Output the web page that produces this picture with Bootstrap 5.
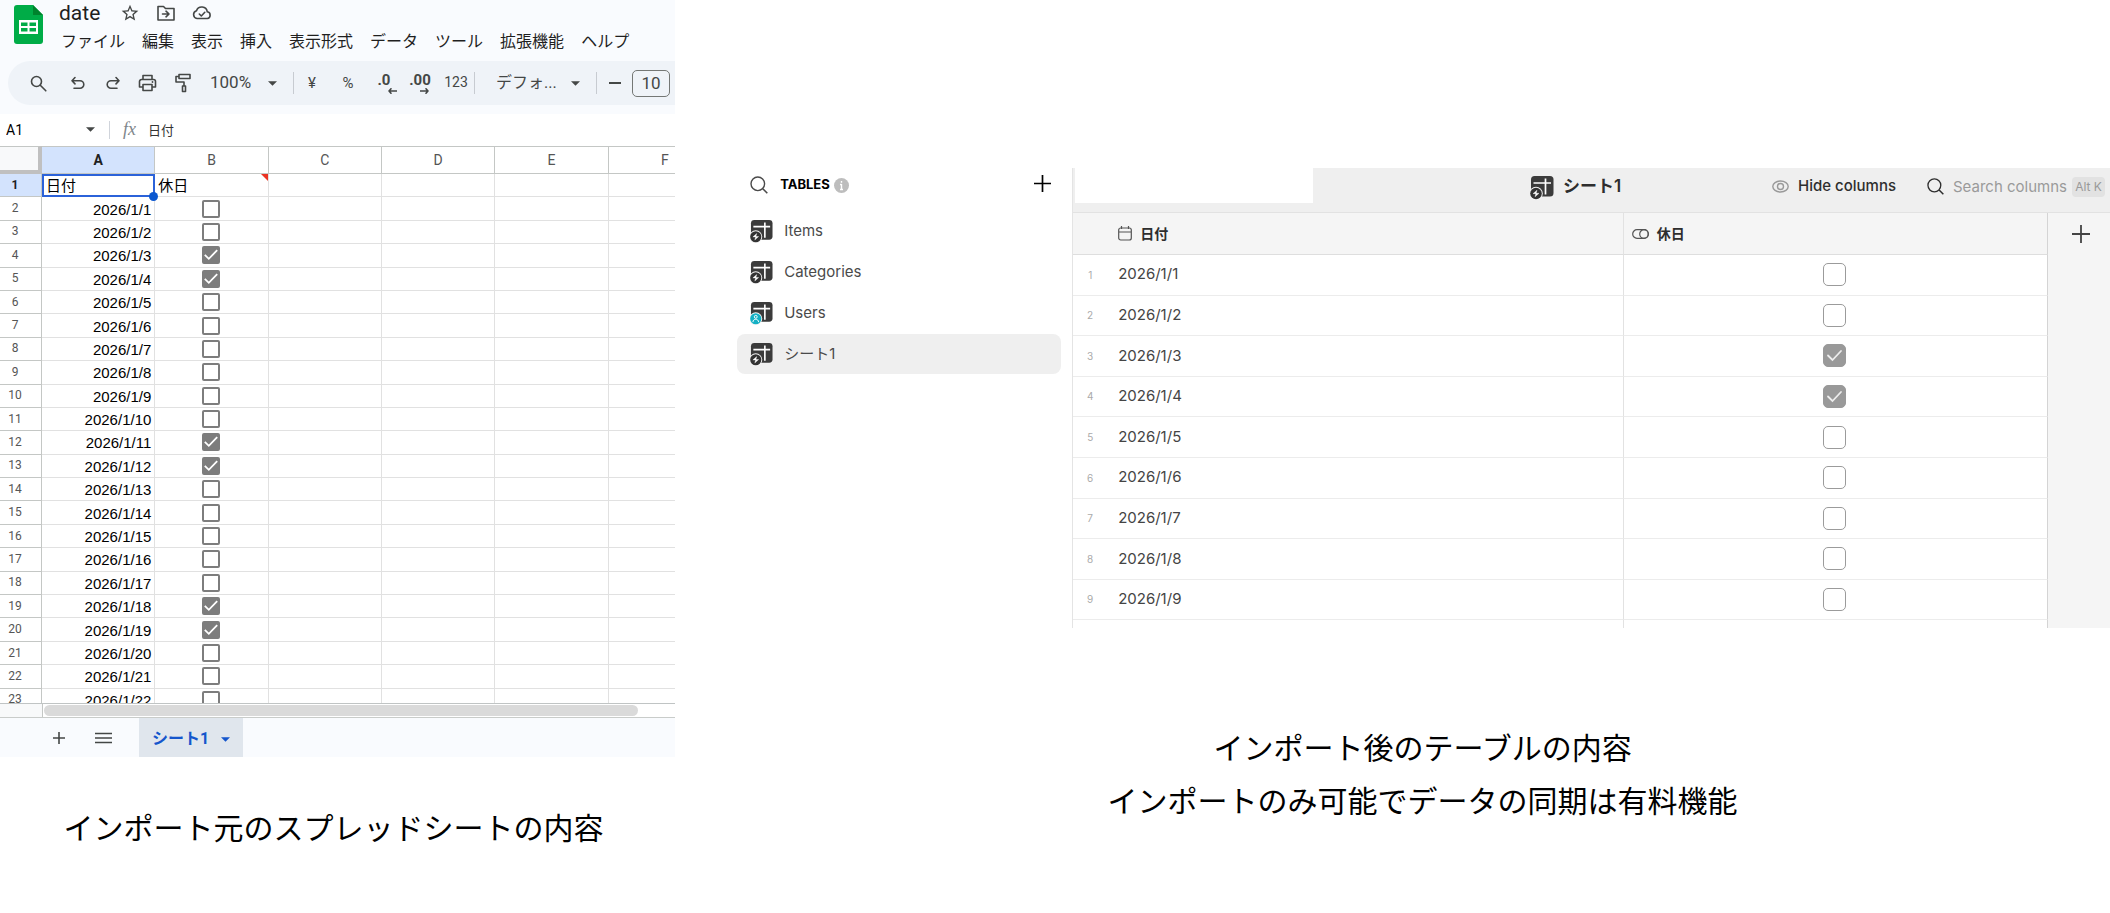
<!DOCTYPE html>
<html lang="ja">
<head>
<meta charset="utf-8">
<meta name="viewport" content="width=device-width, initial-scale=1">
<title>スプレッドシートのインポート</title>
<link href="https://cdn.jsdelivr.net/npm/bootstrap@5.3.0/dist/css/bootstrap.min.css" rel="stylesheet">
<style>
body{font-family:Roboto,"Noto Sans CJK JP",sans-serif;font-size:16px;line-height:1.25;color:#1f1f1f;background:#fff}
svg{display:block;flex:none}
button{border:0;background:none;padding:0;color:inherit;display:flex;align-items:center;justify-content:center}
.ln{fill:none;stroke:currentColor;stroke-width:1.6;stroke-linecap:round;stroke-linejoin:round}
.caption-text{font-family:"Noto Sans CJK JP",sans-serif;font-size:30px;line-height:53px;color:#000}

/* spreadsheet */
.sheet-side{width:32%}
.sheet-head{background:#f9fbfe;height:114px}
.sheet-logo{margin:5px 14px 0}
.doc-row{padding-left:2px}
.doc-name{font-size:21px;line-height:26px;margin-right:20px}
.doc-icons{gap:16px;color:#444746}
.menu-bar{gap:17px;padding-left:4px;line-height:22px;margin-top:5px}
.menu-bar a{color:#1f1f1f;text-decoration:none}
.tool-bar{height:44px;margin:8px 0 0 8px;padding-left:8px;background:#eff3f8;border-radius:22px 0 0 22px;color:#444746}
.tool-bar button{height:36px;width:35px}
.tool-bar .wide-tool{width:44px}
.tool-bar .text-tool{width:36px;font-size:15px}
.tool-bar .num-tool{font-size:14px}
.tool-bar .rule{width:1px;height:22px;background:#c7cbd1}
.tool-select{appearance:none;border:0;height:36px;color:#444746;font-size:17px;background:transparent url("data:image/svg+xml,%3Csvg xmlns='http://www.w3.org/2000/svg' viewBox='0 0 10 5'%3E%3Cpath d='M0 0h10L5 5z' fill='%23444746'/%3E%3C/svg%3E") no-repeat right 16px center/9px 5px}
.zoom-select{width:93px;padding:0 0 0 10px}
.font-select{width:117px;padding:0 0 0 17px;font-size:16px;margin-left:4px}
.size-input{width:38px;height:27px;border:1px solid #747775;border-radius:5px;background:transparent;text-align:center;color:#444746;font-size:17px;padding:0}
.formula-bar{height:32px;padding-bottom:1px}
.name-input{border:0;width:109px;height:24px;padding:0 0 0 6px;font-size:14px;background:url("data:image/svg+xml,%3Csvg xmlns='http://www.w3.org/2000/svg' viewBox='0 0 10 5'%3E%3Cpath d='M0 0h10L5 5z' fill='%23444746'/%3E%3C/svg%3E") no-repeat right 14px center/9px 5px}
.formula-bar .rule{width:1px;height:18px;background:#d0d4db}
.fx{font:italic 18px "Liberation Serif",serif;color:#80868b;width:25px;margin-left:13px}
.formula-input{border:0;font-size:13px;padding:0;height:24px;color:#333}
.grid-pane{height:558px;overflow:hidden;border-bottom:1px solid #c0c4c4}
.grid-tab{width:722px;height:566px;table-layout:fixed;border-collapse:separate;border-spacing:0;line-height:17px}
.grid-tab tbody tr{height:23px}
.grid-tab th{font-weight:400;font-size:14px;color:#555;text-align:center;border:solid #c4c7c5;border-width:1px 1px 1px 0;height:28px;padding:0;line-height:18px}
.grid-tab tbody th{font-size:12px;line-height:16px;height:auto;border-width:0 1px 1px 0;padding:0 11px 1px 0}
.grid-tab .num-col{width:42px}
.grid-tab thead th.corner{background:#f8f9fa;border-right:4px solid #c0c0c0;border-bottom:4px solid #c0c0c0}
.grid-tab th.picked{background:#d3e3fd;color:#1f1f1f;font-weight:700}
.grid-tab td{border:solid #e1e1e1;border-width:0 1px 1px 0;padding:0 3px;color:#000;font-family:"Liberation Sans","Noto Sans CJK JP",sans-serif;font-size:15px;position:relative}
.grid-tab td.day{text-align:right;padding-top:1px}
.grid-tab td.picked{border:2px solid #2b62d9;padding-left:2px}
.grid-tab td.noted::after{content:"";position:absolute;right:0;top:0;border:solid transparent;border-width:0 7px 7px 0;border-right-color:#ea3323}
.dot{position:absolute;right:-5px;bottom:-6px;width:9px;height:9px;border-radius:50%;background:#0b57d0;z-index:1}
.sheet-check,.base-check{float:none;display:block;margin:0 auto}
.form-check-input.sheet-check{width:18px;height:18px;border:2px solid #7d7d7d;border-radius:2px}
.form-check-input.sheet-check:checked{background:#7d7d7d url("data:image/svg+xml,%3Csvg xmlns='http://www.w3.org/2000/svg' viewBox='0 0 14 14'%3E%3Cpath d='M.8 6.8l4 4 8.400-8.600' fill='none' stroke='%23fff' stroke-width='1.800'/%3E%3C/svg%3E") center/14px no-repeat;border-color:#7d7d7d}
.scroll-row{height:14px;gap:1px;border-bottom:1px solid #c9ccca}
.scroll-row .stub{width:43px;height:13px;background:#f8f9fa;border-right:1px solid #c4c7c5}
.scroll-row .thumb{width:88%;height:11px;border-radius:6px;background:#dadada}
.tabs-row{height:39px;background:#f9fbfe;color:#444746;padding-left:50px;gap:27px}
.sheet-tab{background:#e0e6ed;color:#1556cc;height:39px;width:104px;gap:12px;font-weight:700;padding-top:3px}

/* imported tables */
.base-side{font-family:Inter,"Noto Sans CJK JP",sans-serif;margin-left:60px;padding-top:168px;min-width:0}
.base-pane{height:460px}
.tables-nav{width:337px;padding:0 11px 0 2px;color:#4a4a4a;font-size:15px}
.nav-head{height:34px;padding:0 10px 0 13px;margin-bottom:9px}
.nav-head h2{font-size:13px;font-weight:700;color:#000;margin:0 4px 0 12px}
.nav-row{height:40px;border-radius:8px;padding-left:13px;gap:11px;margin-bottom:1px;color:#4a4a4a;text-decoration:none}
.nav-row.current{background:#efefef}
.base-main{background:#f5f5f5;border-left:1px solid #e4e4e4;min-width:0;overflow:hidden}
.base-bar{height:45px;background:#efefef;border-bottom:1px solid #e2e2e2;display:grid;grid-template-columns:1fr auto 1fr;padding:0 5px 0 2px}
.blank-box{background:#fff;width:238px;height:35px}
.base-title{font-size:17px;font-weight:600;margin:0 29px 6px 0;gap:9px;color:#2e2e2e}
.base-tools{font-size:15px;color:#2e2e2e;padding-bottom:7px}
.base-tools button{gap:9px;font-weight:500;margin-right:31px}
.search-cols{border:0;background:none;padding:0;width:119px;margin-left:9px;height:22px}
.search-cols::placeholder{color:#9a9a9a;opacity:1}
.key-hint{font-size:12px;color:#999;background:#e2e2e2;border-radius:4px;width:33px;height:20px;line-height:20px;text-align:center}
.base-tab{width:94%;height:448px;table-layout:fixed;border-collapse:separate;border-spacing:0;color:#444;font-size:15px}
.base-tab .index-col{width:4%}
.base-tab .flag-col{width:43.5%}
.base-tab thead th{height:42px;background:#f5f5f5;border-bottom:1px solid #dedede;font-size:14px;font-weight:700;color:#2e2e2e;padding:0}
.base-tab td,.base-tab tbody th{background:#fff;border-bottom:1px solid #ececec;padding:0}
.base-tab tbody th{font-weight:400;font-size:10px;color:#aaa;text-align:center;padding-right:5px}
.base-tab td.day,.base-tab thead th.day{border-right:1px solid #e2e2e2;padding-left:6px}
.base-tab .flag{border-right:1px solid #d4d4d4}
.base-tab td.flag{padding-right:2px}
.base-tab thead th.flag{padding-left:8px}
.form-check-input.base-check{width:23px;height:23px;border:1px solid #9b9b9b;border-radius:5px}
.form-check-input.base-check:checked{background:#999 url("data:image/svg+xml,%3Csvg xmlns='http://www.w3.org/2000/svg' viewBox='0 0 23 23'%3E%3Cpath d='M5 11.500l4.500 4.500L18 7' fill='none' stroke='%23ededed' stroke-width='1.800' stroke-linecap='round'/%3E%3C/svg%3E") center/23px no-repeat;border-color:#999}
.add-col{width:6%;height:42px;padding-left:4px;color:#444}
.base-caption{padding-top:92px}
.sheet-caption{padding:43px 8px 0 0}
</style>
</head>
<body>
<svg class="d-none" aria-hidden="true">
  <symbol id="tbl-base" viewBox="0 0 24 25"><rect x="1" y="1" width="22.500" height="20.500" rx="3.500" fill="#3b3b3b"/><path d="M3.500 8h17.500M15.500 3.500v16" fill="none" stroke="#fff" stroke-width="1.700"/><circle cx="6" cy="18.500" r="6.800" fill="#f4f4f4"/><circle cx="6" cy="18.500" r="5.800" fill="#333"/><path d="M7 15.200L3 18.700h3zM5 21.800L9 18.300H6z" fill="#fff" stroke="#fff" stroke-width=".4"/></symbol>
  <symbol id="tbl-user" viewBox="0 0 24 25"><rect x="1" y="1" width="22.500" height="20.500" rx="3.500" fill="#3b3b3b"/><path d="M3.500 8h17.500M15.500 3.500v16" fill="none" stroke="#fff" stroke-width="1.700"/><circle cx="6" cy="18.500" r="6.800" fill="#f4f4f4"/><circle cx="6" cy="18.500" r="5.800" fill="#14b0c4"/><circle cx="6" cy="16.500" r="1.500" fill="none" stroke="#fff"/><path d="M3 22c.3-4 5.700-4 6 0" fill="none" stroke="#fff"/></symbol>
  <symbol id="lens" viewBox="0 0 18 18"><circle cx="7.800" cy="7.800" r="6.800" fill="none" stroke="currentColor" stroke-width="1.400"/><path d="M12.800 12.800l4.500 4.500" stroke="currentColor" stroke-width="1.600"/></symbol>
  <symbol id="cross" viewBox="0 0 18 18"><path d="M9 0v18M0 9h18" stroke="currentColor" stroke-width="1.800"/></symbol>
</svg>

<div class="d-flex align-items-start">
  <section class="sheet-side flex-shrink-0">
    <header class="sheet-head overflow-hidden">
      <div class="d-flex">
        <svg class="sheet-logo" width="29" height="39" viewBox="0 0 29 39"><path d="M3 0h16l10 10v26a3 3 0 0 1-3 3H3a3 3 0 0 1-3-3V3a3 3 0 0 1 3-3z" fill="#00ac47"/><path d="M19 0l10 10H19z" fill="#00832d"/><path d="M5 15h19v14H5zM7 17.500v3.500h6.500v-3.500zM15.500 17.500v3.500H22v-3.500zM7 23v3.500h6.500V23zM15.500 23v3.500H22V23z" fill="#fff" fill-rule="evenodd"/></svg>
        <div>
          <div class="doc-row d-flex align-items-center">
            <span class="doc-name">date</span>
            <div class="doc-icons d-flex align-items-center">
              <button aria-label="スター"><svg width="20" height="20" viewBox="0 0 24 24"><path d="M22 9.240l-7.190-.62L12 2 9.190 8.630 2 9.240l5.460 4.730L5.820 21 12 17.270 18.180 21l-1.630-7.030L22 9.240zM12 15.400l-3.760 2.270 1-4.280-3.320-2.880 4.380-.38L12 6.100l1.710 4.040 4.380.38-3.320 2.880 1 4.280L12 15.400z" fill="currentColor"/></svg></button>
              <button aria-label="移動"><svg width="20" height="20" viewBox="0 0 20 20"><path d="M2 17V3.500h5.500l2 2H18V17z" class="ln"/><path d="M6.500 11h6M10 8.200l3 2.800-3 2.800" class="ln"/></svg></button>
              <button aria-label="保存状態"><svg width="20" height="20" viewBox="0 0 20 20"><path d="M5 15.500a4 4 0 0 1-.5-7.800 5.600 5.600 0 0 1 10.800 1.100 3.400 3.400 0 0 1 0 6.700z" class="ln"/><path d="M7.300 11l2 2 3.500-3.700" class="ln"/></svg></button>
            </div>
          </div>
          <nav class="menu-bar d-flex text-nowrap">
            <a href="#">ファイル</a><a href="#">編集</a><a href="#">表示</a><a href="#">挿入</a><a href="#">表示形式</a><a href="#">データ</a><a href="#">ツール</a><a href="#">拡張機能</a><a href="#">ヘルプ</a>
          </nav>
        </div>
      </div>
      <div class="tool-bar d-flex align-items-center">
        <button class="wide-tool" aria-label="検索"><svg width="17" height="17" viewBox="0 0 17 17"><circle cx="6.500" cy="6.500" r="5" class="ln"/><path d="M10.300 10.300l5.500 5.500" class="ln"/></svg></button>
        <button aria-label="元に戻す"><svg width="16" height="16" viewBox="0 0 16 16"><path d="M5 2.500L2 5.700l3 3.200M2.500 5.700h7.500a3.800 3.800 0 0 1 0 7.600H4" class="ln"/></svg></button>
        <button aria-label="やり直し"><svg width="16" height="16" viewBox="0 0 16 16"><path d="M11 2.500l3 3.200-3 3.200M13.500 5.700H6a3.800 3.800 0 0 0 0 7.600h6" class="ln"/></svg></button>
        <button aria-label="印刷"><svg width="19" height="18" viewBox="0 0 19 18"><path d="M5 5V1.500h9V5M5 13H1.500V7.500A2 2 0 0 1 3.500 5.500h12a2 2 0 0 1 2 2V13H14M5 10.500h9v6H5z" class="ln"/><circle cx="14.500" cy="8" r=".9" fill="currentColor"/></svg></button>
        <button aria-label="書式の貼り付け"><svg width="18" height="20" viewBox="0 0 18 20"><path d="M5 1.500h11v4H5zM5 3.500H2V9h8v4M8.500 13h3v5.500h-3z" class="ln"/></svg></button>
        <select class="tool-select zoom-select" aria-label="ズーム"><option>100%</option></select>
        <span class="rule"></span>
        <button class="text-tool">¥</button>
        <button class="text-tool">%</button>
        <button class="text-tool flex-column fw-bold" aria-label="小数点以下の桁数を減らす"><span class="lh-1">.0</span><svg width="9" height="6" viewBox="0 0 9 6" class="ms-3"><path d="M8.500 3H1M3 .8L1 3l2 2.200" class="ln"/></svg></button>
        <button class="text-tool flex-column fw-bold" aria-label="小数点以下の桁数を増やす"><span class="lh-1">.00</span><svg width="9" height="6" viewBox="0 0 9 6" class="ms-2"><path d="M.5 3H8M6 .8L8 3 6 5.200" class="ln"/></svg></button>
        <button class="text-tool num-tool">123</button>
        <span class="rule"></span>
        <select class="tool-select font-select" aria-label="フォント"><option>デフォ...</option></select>
        <span class="rule"></span>
        <button aria-label="縮小"><svg width="12" height="2"><path d="M0 1h12" stroke="currentColor" stroke-width="2"/></svg></button>
        <input class="size-input" aria-label="フォントサイズ" value="10">
      </div>
    </header>
    <div class="formula-bar d-flex align-items-center">
      <input class="name-input" aria-label="名前ボックス" value="A1"><span class="rule"></span><span class="fx">fx</span><input class="formula-input" aria-label="数式" value="日付">
    </div>
    <div class="grid-pane">
      <table class="grid-tab">
        <thead><tr><th class="num-col corner"></th><th class="picked">A</th><th>B</th><th>C</th><th>D</th><th>E</th><th>F</th></tr></thead>
        <tbody id="sheetRows"><tr><th class="picked">1</th><td class="picked">日付<span class="dot"></span></td><td class="noted">休日</td><td></td><td></td><td></td><td></td></tr></tbody>
      </table>
    </div>
    <div class="scroll-row d-flex align-items-center"><span class="stub"></span><span class="thumb"></span></div>
    <div class="tabs-row d-flex align-items-center">
      <button aria-label="シートを追加"><svg width="18" height="18" viewBox="0 0 18 18"><path d="M9 3v12M3 9h12" stroke="currentColor" stroke-width="1.600"/></svg></button>
      <button aria-label="すべてのシート"><svg width="17" height="12" viewBox="0 0 17 12"><path d="M0 1.500h17M0 6h17M0 10.500h17" stroke="currentColor" stroke-width="1.600"/></svg></button>
      <button class="sheet-tab"><span>シート1</span><svg width="9" height="5" viewBox="0 0 10 5"><path d="M0 0h10L5 5z" fill="currentColor"/></svg></button>
    </div>
    <p class="caption-text sheet-caption text-center m-0 text-nowrap">インポート元のスプレッドシートの内容</p>
  </section>

  <section class="base-side flex-grow-1">
    <div class="base-pane d-flex overflow-hidden">
      <nav class="tables-nav flex-shrink-0">
        <div class="nav-head d-flex align-items-center">
          <svg width="18" height="18"><use href="#lens"/></svg>
          <h2>TABLES</h2>
          <svg width="15" height="15" viewBox="0 0 15 15"><circle cx="7.500" cy="7.500" r="7.500" fill="#bdbdbd"/><path d="M7.500 3v1.800M7.500 6v5.500M6 11.500h3M6 6.500h1.500" stroke="#fff" stroke-width="1.400"/></svg>
          <button class="ms-auto text-black pb-1" aria-label="テーブルを追加"><svg width="17" height="17"><use href="#cross" width="17" height="17"/></svg></button>
        </div>
        <a href="#" class="nav-row d-flex align-items-center"><svg width="23" height="24"><use href="#tbl-base"/></svg>Items</a>
        <a href="#" class="nav-row d-flex align-items-center"><svg width="23" height="24"><use href="#tbl-base"/></svg>Categories</a>
        <a href="#" class="nav-row d-flex align-items-center"><svg width="23" height="24"><use href="#tbl-user"/></svg>Users</a>
        <a href="#" class="nav-row current d-flex align-items-center"><svg width="23" height="24"><use href="#tbl-base"/></svg>シート1</a>
      </nav>
      <div class="base-main flex-grow-1">
        <div class="base-bar">
          <div class="blank-box"></div>
          <div class="base-title d-flex align-items-center"><svg width="24" height="25"><use href="#tbl-base"/></svg>シート1</div>
          <div class="base-tools d-flex align-items-center justify-content-end">
            <button><svg width="17" height="13" viewBox="0 0 17 13" fill="none" stroke="#999" stroke-width="1.400"><ellipse cx="8.500" cy="6.500" rx="7.700" ry="5.500"/><circle cx="8.500" cy="6.500" r="3"/></svg>Hide columns</button>
            <label for="colSearch" aria-label="Search columns"><svg width="17" height="17"><use href="#lens" width="17" height="17"/></svg></label>
            <input id="colSearch" class="search-cols" placeholder="Search columns"><span class="key-hint">Alt K</span>
          </div>
        </div>
        <div class="d-flex align-items-start">
          <table class="base-tab">
            <colgroup><col class="index-col"><col><col class="flag-col"></colgroup>
            <thead><tr><th></th>
              <th class="day"><span class="d-flex align-items-center gap-2"><svg width="14" height="15" viewBox="0 0 14 15" fill="none" stroke="#555" stroke-width="1.200"><rect x=".7" y="2" width="12.600" height="12" rx="2"/><path d="M1 6h12M3.500 0v3M10.500 0v3"/></svg>日付</span></th>
              <th class="flag"><span class="d-flex align-items-center gap-2"><svg width="17" height="10" viewBox="0 0 17 10" fill="none" stroke="#555" stroke-width="1.200"><rect x=".7" y=".7" width="15.600" height="8.600" rx="4.300"/><circle cx="12" cy="5" r="4.300"/></svg>休日</span></th></tr></thead>
            <tbody id="baseRows"></tbody>
          </table>
          <button class="add-col" aria-label="列を追加"><svg width="18" height="18"><use href="#cross"/></svg></button>
        </div>
      </div>
    </div>
    <div class="base-caption text-center text-nowrap">
      <p class="caption-text m-0">インポート後のテーブルの内容</p>
      <p class="caption-text m-0">インポートのみ可能でデータの同期は有料機能</p>
    </div>
  </section>
</div>

<script src="https://cdn.jsdelivr.net/npm/bootstrap@5.3.0/dist/js/bootstrap.bundle.min.js"></script>
<script>
const holidays = [3, 4, 11, 12, 18, 19];
const box = (d, cls) => `<input type="checkbox" class="form-check-input ${cls}" aria-label="休日 2026/1/${d}"${holidays.includes(d) ? ' checked' : ''}>`;
let sheet = '', base = '';
for (let d = 1; d <= 22; d++)
  sheet += `<tr><th>${d + 1}</th><td class="day">2026/1/${d}</td><td>${box(d, 'sheet-check')}</td><td></td><td></td><td></td><td></td></tr>`;
for (let d = 1; d <= 9; d++)
  base += `<tr><th>${d}</th><td class="day">2026/1/${d}</td><td class="flag">${box(d, 'base-check')}</td></tr>`;
// the next row is only partly scrolled into view
base += `<tr><th></th><td class="day"></td><td class="flag">${box(10, 'base-check')}</td></tr>`;
document.getElementById('sheetRows').insertAdjacentHTML('beforeend', sheet);
document.getElementById('baseRows').innerHTML = base;
</script>
</body>
</html>
